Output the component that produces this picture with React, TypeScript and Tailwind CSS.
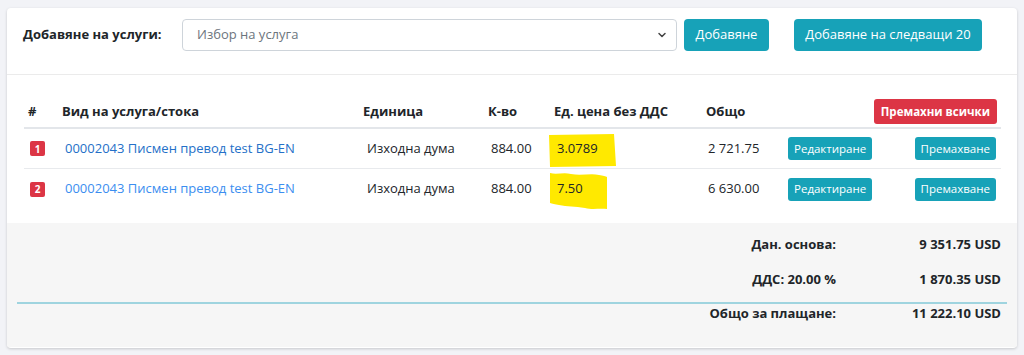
import { ChevronDown } from "lucide-react";

type Line = {
  no: number;
  name: string;
  unit: string;
  qty: string;
  price: string;
  total: string;
  linkClass: string;
  mark: "rect" | "wave";
};

const lines: Line[] = [
  {
    no: 1,
    name: "00002043 Писмен превод test BG-EN",
    unit: "Изходна дума",
    qty: "884.00",
    price: "3.0789",
    total: "2 721.75",
    linkClass: "text-[#2470c8]",
    mark: "rect",
  },
  {
    no: 2,
    name: "00002043 Писмен превод test BG-EN",
    unit: "Изходна дума",
    qty: "884.00",
    price: "7.50",
    total: "6 630.00",
    linkClass: "text-[#3b8ef0]",
    mark: "wave",
  },
];

const totals = [
  { label: "Дан. основа:", value: "9 351.75 USD" },
  { label: "ДДС: 20.00 %", value: "1 870.35 USD" },
];

function Marker({ kind }: { kind: "rect" | "wave" }) {
  if (kind === "rect") {
    return (
      <svg className="absolute left-[-2px] top-[4px]" width="69" height="35" viewBox="0 0 69 35">
        <path d="M1 2 L66 1 L68 33 L2 34 Z" fill="#ffe900" />
      </svg>
    );
  }
  return (
    <svg className="absolute left-[-1px] top-[3px]" width="60" height="38" viewBox="0 0 60 38">
      <path
        d="M1 1 C8 3 14 0 22 2 C32 4 42 1 50 3 C54 4 57 4 58 5 L58 37 C50 36 44 38 36 36 C26 34 18 35 10 33 C6 32 3 32 1 31 Z"
        fill="#ffe900"
      />
    </svg>
  );
}

function InfoButton({ children }: { children: string }) {
  return (
    <button className="h-[23px] rounded-[3px] bg-[#17a2b8] px-[6px] text-[11.5px] text-white">
      {children}
    </button>
  );
}

export default function App() {
  return (
    <div
      className="h-[355px] w-[1024px] overflow-hidden bg-[#f2f3f7] pl-[7px] pr-[7px] pt-[8px] text-[13px] text-[#212529]"
      style={{ fontFamily: '"Open Sans", "Noto Sans", sans-serif' }}
    >
      <div className="h-[340px] overflow-hidden rounded-[4px] bg-white shadow-[0_1px_3px_rgba(0,0,0,0.18)]">
        {/* add services */}
        <div className="flex h-[67px] items-start border-b border-[#ebebeb] pl-[16px] pt-[11px]">
          <span className="flex h-[32px] w-[159px] items-center font-bold">Добавяне на услуги:</span>
          <div className="flex h-[32px] w-[495px] items-center justify-between rounded-[4px] border border-[#ced4da] pl-[14px] pr-[8px] text-[#6c757d]">
            <span>Избор на услуга</span>
            <ChevronDown size={12} strokeWidth={3} className="text-[#444]" />
          </div>
          <button className="ml-[7px] h-[32px] w-[85px] rounded-[4px] bg-[#17a2b8] text-[13px] text-white">
            Добавяне
          </button>
          <button className="ml-[25px] h-[32px] w-[188px] rounded-[4px] bg-[#17a2b8] text-[13px] text-white">
            Добавяне на следващи 20
          </button>
        </div>

        {/* table */}
        <div className="pl-[17px] pr-[16px] pt-[24px]">
          <div className="flex h-[30px] items-center border-b-2 border-[#e3e6ea] pb-[3px] font-bold">
            <div className="w-[34px] pl-[4px]">#</div>
            <div className="w-[301px] pl-[4px]">Вид на услуга/стока</div>
            <div className="w-[125px] pl-[4px]">Единица</div>
            <div className="w-[66px] pl-[4px]">К-во</div>
            <div className="w-[152px] pl-[4px]">Ед. цена без ДДС</div>
            <div className="w-[82px] pl-[4px]">Общо</div>
            <div className="flex flex-1 justify-end pr-[4px]">
              <button className="h-[25px] rounded-[3px] bg-[#dc3545] px-[7px] text-[11.5px] font-bold text-white">
                Премахни всички
              </button>
            </div>
          </div>

          {lines.map((l, i) => (
            <div
              key={l.no}
              className={
                i === 0
                  ? "flex h-[40px] items-center border-b border-[#e8eaed]"
                  : "flex h-[40px] items-center"
              }
            >
              <div className="w-[34px] pl-[6px]">
                <span className="flex h-[15px] w-[15px] items-center justify-center rounded-[2px] bg-[#dc3545] text-[10px] font-bold leading-none text-white">
                  {l.no}
                </span>
              </div>
              <div className="w-[301px] pl-[7px]">
                <a className={l.linkClass}>{l.name}</a>
              </div>
              <div className="w-[125px] pl-[8px]">{l.unit}</div>
              <div className="w-[66px] pl-[7px]">{l.qty}</div>
              <div className="relative flex h-full w-[152px] items-center pl-[7px]">
                <Marker kind={l.mark} />
                <span className="relative">{l.price}</span>
              </div>
              <div className="w-[82px] pl-[6px]">{l.total}</div>
              <div className="w-[120px] pl-[4px]">
                <InfoButton>Редактиране</InfoButton>
              </div>
              <div className="flex flex-1 justify-end pr-[5px]">
                <InfoButton>Премахване</InfoButton>
              </div>
            </div>
          ))}
        </div>

        {/* totals */}
        <div className="mt-[14px] h-[124px] bg-[#f6f6f6] pt-[4px] font-bold">
          {totals.map((t) => (
            <div key={t.label} className="flex h-[35px] items-center justify-end pr-[16px]">
              <span>{t.label}</span>
              <span className="w-[165px] text-right">{t.value}</span>
            </div>
          ))}
          <div className="ml-[10px] mr-[10px] mt-[5px] flex h-[22px] items-center justify-end border-t-2 border-[#9fd4df] pr-[6px]">
            <span>Общо за плащане:</span>
            <span className="w-[165px] text-right">11 222.10 USD</span>
          </div>
        </div>
      </div>
    </div>
  );
}
